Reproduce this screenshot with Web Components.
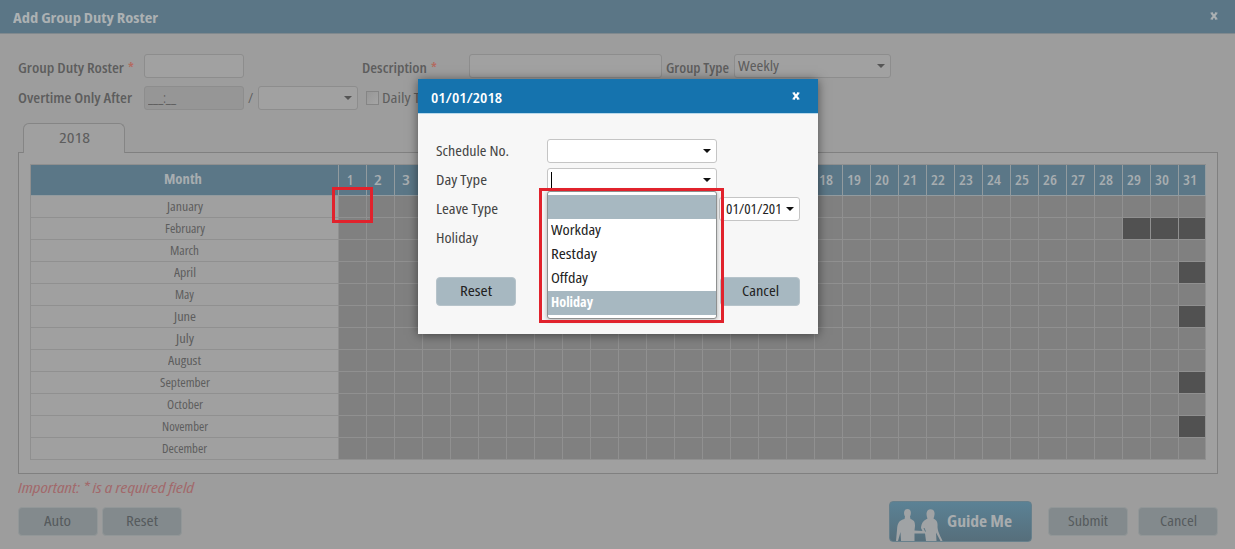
<!DOCTYPE html>
<html lang="en">
<head>
<meta charset="utf-8">
<title>Add Group Duty Roster</title>
<style>
  body {
    margin: 0;
    width: 1235px;
    height: 549px;
    overflow: hidden;
    position: relative;
    background: #9d9d9d;
    color: #5d5d5d;
    font-family: "Open Sans", "Noto Sans", sans-serif;
    font-stretch: 75%;
    font-size: 14px;
    line-height: 20px;
  }
</style>
</head>
<body>
<duty-roster></duty-roster>
<day-dialog heading="01/01/2018"></day-dialog>
<focus-frame style="--x:332px;--y:187px;--w:41px;--h:36px"></focus-frame>
<focus-frame style="--x:539px;--y:188px;--w:185px;--h:135px"></focus-frame>

<script>
// Text squeezed or stretched to the width it should take up
class FitText extends HTMLElement {
  constructor() {
    super();
    this.attachShadow({ mode: 'open' });
  }

  connectedCallback() {
    const w = Number(this.getAttribute('w'));
    this.shadowRoot.innerHTML = `
      <style>
        :host {
          display: inline-block;
          width: ${w}px;
          white-space: nowrap;
          flex: none;
          text-align: left;
        }
        span {
          display: inline-block;
          transform-origin: 0 50%;
        }
      </style>
      <span><slot></slot></span>
    `;
    const span = this.shadowRoot.querySelector('span');
    const real = span.getBoundingClientRect().width;
    if (real) span.style.transform = `scaleX(${w / real})`;
  }
}

class TitleBar extends HTMLElement {
  constructor() {
    super();
    this.attachShadow({ mode: 'open' });
    this.shadowRoot.innerHTML = `
      <style>
        :host {
          display: flex;
          justify-content: space-between;
          align-items: center;
          box-sizing: border-box;
          font-weight: 700;
        }
        svg {
          display: block;
          margin-top: var(--close-shift, -4px);
        }
      </style>
      <slot></slot>
      <svg width="8" height="8" viewBox="0 0 8 8" fill="none" stroke="currentColor">
        <path d="M1.5 1L6.5 7M6.5 1L1.5 7" stroke-width="2"/>
        <path d="M.5 1H3M5 1H7.500M.5 7H3M5 7H7.500" stroke-width="1"/>
      </svg>
    `;
  }
}

class TextBox extends HTMLElement {
  constructor() {
    super();
    this.attachShadow({ mode: 'open' });
    this.shadowRoot.innerHTML = `
      <style>
        :host {
          display: flex;
          align-items: center;
          box-sizing: border-box;
          width: 100%;
          height: 24px;
          padding: 0 0 0 3px;
          overflow: hidden;
          border: 1px solid var(--field-line, #8d8d8d);
          border-radius: 3px;
          background: var(--field-bg, #a1a1a1);
        }
        .value { flex: 1; display: flex; align-items: center; overflow: hidden; height: 100%; }
        svg { display: none; flex: none; margin: 0 5px 0 6px; }
        :host([drop]) svg { display: block; }
      </style>
      <div class="value"><slot></slot></div>
      <svg width="8" height="4" viewBox="0 0 8 4"><path d="M0 0H8L4 4Z" fill="var(--arrow, #555)"/></svg>
    `;
  }
}

class PushButton extends HTMLElement {
  constructor() {
    super();
    this.attachShadow({ mode: 'open' });
    this.shadowRoot.innerHTML = `
      <style>
        :host {
          display: flex;
          align-items: center;
          justify-content: center;
          box-sizing: border-box;
          width: 80px;
          height: 29px;
          padding-bottom: 1px;
          border-radius: 4px;
          border: 1px solid var(--button-line, #929798);
          background: var(--button-bg, #838a8d);
          color: var(--button-ink, #565b5d);
        }
      </style>
      <slot></slot>
    `;
  }
}

class GuideButton extends HTMLElement {
  constructor() {
    super();
    this.attachShadow({ mode: 'open' });
    this.shadowRoot.innerHTML = `
      <style>
        :host {
          display: flex;
          box-sizing: border-box;
          width: 144px;
          height: 41px;
          border-radius: 4px;
          overflow: hidden;
          border: 1px solid #67808c;
          background: linear-gradient(#5b8295, #566e7b);
          color: #a8acae;
          font-weight: 700;
          font-size: 16px;
          align-items: center;
        }
        svg { display: block; margin-left: 5px; flex: none; }
        slot { display: block; margin: 0 0 1px 4px; }
      </style>
      <svg width="48" height="39" viewBox="0 0 48 39" fill="#a0a3a5">
        <path d="M10 14.500 C8.500 12 8.500 7 12.500 7 C16.500 7 16.500 12 15 14.500 L15.500 17 C19.500 18.500 20 20 20 24 L19.500 28.500 L27.500 29 L26 26 C26.500 21 28 19 32.500 16.500 C30.500 12 31.500 7.300 35.500 7.300 C40 7.300 40.500 12 38.500 16.500 C42 18 43 21 42.500 25 C43 31 46 35 47.500 39 L45.500 39 L41 30.500 L41.500 39 L31 39 L30 31.500 L19.500 31.500 L19.500 39 L6 39 L5.500 30 L3 39 L1 39 L2 28 C2.500 20 4.500 18.500 9.500 17 Z"/>
        <path d="M29 26 L30.500 29.500" stroke="#5d7784" fill="none"/>
      </svg>
      <slot></slot>
    `;
  }
}

class MonthTable extends HTMLElement {
  constructor() {
    super();
    this.attachShadow({ mode: 'open' });
  }

  connectedCallback() {
    // name, drawn width, number of days
    const months = [
      ['January', 36, 31], ['February', 40, 28], ['March', 29, 31], ['April', 22, 30],
      ['May', 19, 31], ['June', 22, 30], ['July', 18, 31], ['August', 33, 31],
      ['September', 50, 30], ['October', 36, 31], ['November', 46, 30], ['December', 45, 31]
    ];
    const days = Array.from({ length: 31 }, (_, i) => i + 1);
    // days 4 to 17 lie under the dialog
    const head = days.map(d => `<div class="day">${d > 3 && d < 18 ? '' : `<fit-text w="${d === 1 ? 6 : d < 10 ? 8 : 14}">${d}</fit-text>`}</div>`).join('');
    const rows = months.map(([name, w, count]) => `
      <div class="month"><fit-text w="${w}">${name}</fit-text></div>
      ${days.map(d => `<div class="cell ${d > count ? 'off' : ''}"></div>`).join('')}
    `).join('');

    this.shadowRoot.innerHTML = `
      <style>
        :host {
          display: grid;
          box-sizing: border-box;
          width: 1176px;
          grid-template-columns: 308px repeat(30, 28px) 27px;
          grid-template-rows: 31px repeat(12, 22px);
          border: solid #8f8f8f;
          border-width: 1px 0 0 1px;
        }
        div {
          box-sizing: border-box;
          display: flex;
          align-items: center;
          justify-content: center;
          border: solid #909090;
          border-width: 0 1px 1px 0;
        }
        .head, .day {
          background: #5b7787;
          color: #a7adb0;
          font-weight: 700;
          border-color: #929b9f;
          padding-bottom: 2px;
        }
        .day { font-size: 15px; font-weight: 600; padding-right: 5px; padding-bottom: 3px; }
        .head { padding-right: 4px; }
        .month { font-size: 12px; background: #a0a0a0; }
        .cell { background: #808080; }
        .off { background: #515151; }
      </style>
      <div class="head"><fit-text w="38">Month</fit-text></div>${head}${rows}
    `;
  }
}

class DutyRoster extends HTMLElement {
  constructor() {
    super();
    this.attachShadow({ mode: 'open' });
  }

  connectedCallback() {
    this.shadowRoot.innerHTML = `
      <style>
        :host { display: block; }
        title-bar {
          height: 34px;
          padding: 2px 17px 0 13px;
          background: #5b7686;
          border-bottom: 1px solid #80898e;
          color: #acb1b3;
        }
        main { padding: 20px 17px 0 18px; }
        .row { display: grid; align-items: center; height: 24px; }
        .first { grid-template-columns: 126px 100px 118px 107px 193px 4px 68px 157px; }
        .second { grid-template-columns: 126px 100px 14px 100px 8px 16px auto; margin-top: 8px; }
        .label { display: flex; gap: 4px; font-weight: 600; white-space: nowrap; padding-top: 3px; }
        .second .label { padding-top: 0; }
        .req { color: #b46a60; }
        .slash { padding-left: 4px; }
        .mask { --field-bg: #969696; }
        .check {
          width: 13px;
          height: 14px;
          box-sizing: border-box;
          border: 1px solid #858585;
          background: linear-gradient(135deg, #979797, #a5a5a5);
        }
        .tab {
          box-sizing: border-box;
          width: 102px;
          height: 30px;
          margin: 13px 0 -1px 5px;
          border: 1px solid #858585;
          border-bottom: 0;
          border-radius: 6px 6px 0 0;
          background: #a0a0a0;
          display: flex;
          align-items: center;
          justify-content: center;
          padding-bottom: 3px;
          font-size: 15px;
          position: relative;
        }
        .panel {
          box-sizing: border-box;
          height: 322px;
          border: 1px solid #808080;
          background: #a0a0a0;
          padding: 11px;
        }
        .note { color: #a2696b; font-style: italic; padding: 4px 0 0 0; height: 29px; box-sizing: border-box; }
        footer { display: flex; align-items: center; gap: 4px; height: 41px; margin-top: -2px; }
        guide-button { margin: 0 12px 0 703px; }
        footer push-button:last-child { margin-left: 6px; }
      </style>
      <title-bar><fit-text w="145">Add Group Duty Roster</fit-text></title-bar>
      <main>
        <div class="row first">
          <div class="label"><fit-text w="106">Group Duty Roster</fit-text><span class="req">*</span></div>
          <text-box></text-box>
          <span></span>
          <div class="label"><fit-text w="65">Description</fit-text><span class="req">*</span></div>
          <text-box></text-box>
          <span></span>
          <div class="label"><fit-text w="63">Group Type</fit-text></div>
          <text-box drop><fit-text w="41">Weekly</fit-text></text-box>
        </div>
        <div class="row second">
          <div class="label"><fit-text w="114">Overtime Only After</fit-text></div>
          <text-box class="mask"><fit-text w="28">___:__</fit-text></text-box>
          <span class="slash">/</span>
          <text-box drop></text-box>
          <span></span>
          <span class="check"></span>
          <fit-text w="38">Daily T</fit-text>
        </div>
        <div class="tab"><fit-text w="31">2018</fit-text></div>
        <div class="panel"><month-table></month-table></div>
        <div class="note"><fit-text w="176">Important: * is a required field</fit-text></div>
        <footer>
          <push-button><fit-text w="27">Auto</fit-text></push-button>
          <push-button><fit-text w="32">Reset</fit-text></push-button>
          <guide-button><fit-text w="65">Guide Me</fit-text></guide-button>
          <push-button><fit-text w="40">Submit</fit-text></push-button>
          <push-button><fit-text w="37">Cancel</fit-text></push-button>
        </footer>
      </main>
    `;
  }
}

class DropList extends HTMLElement {
  constructor() {
    super();
    this.attachShadow({ mode: 'open' });
    this.shadowRoot.innerHTML = `
      <style>
        :host {
          display: block;
          box-sizing: border-box;
          width: 170px;
          height: 128px;
          padding: 3px 0;
          background: #fff;
          border: 1px solid #8e9090;
          border-radius: 3px;
          box-shadow: 0 1px 5px rgba(0,0,0,.3);
          color: #222;
        }
        .item { box-sizing: border-box; height: 24px; padding: 0 0 2px 3px; display: flex; align-items: center; }
        .fill { background: #a7b8c1; }
        .active { color: #fff; font-weight: 700; }
      </style>
      <div class="item fill"></div>
      <div class="item"><fit-text w="50">Workday</fit-text></div>
      <div class="item"><fit-text w="46">Restday</fit-text></div>
      <div class="item"><fit-text w="37">Offday</fit-text></div>
      <div class="item fill active"><fit-text w="42">Holiday</fit-text></div>
    `;
  }
}

class DayDialog extends HTMLElement {
  constructor() {
    super();
    this.attachShadow({ mode: 'open' });
  }

  connectedCallback() {
    this.shadowRoot.innerHTML = `
      <style>
        :host {
          position: absolute;
          left: 418px;
          top: 79px;
          width: 400px;
          height: 255px;
          background: #f7f7f7;
          box-shadow: 0 1px 10px rgba(0,0,0,.5);
          color: #444;
          --field-line: #c5c5c5;
          --field-bg: #fff;
          --arrow: #111;
          --button-bg: #a7b8c1;
          --button-line: #b6c3ca;
          --button-ink: #222;
        }
        title-bar {
          height: 35px;
          padding: 1px 18px 0 13px;
          font-weight: 600;
          background: #1573ae;
          border-bottom: 1px solid #b9d9eb;
          color: #fff;
          font-size: 15px;
          --close-shift: -2px;
        }
        .form {
          display: grid;
          grid-template-columns: 111px 170px;
          grid-auto-rows: 24px;
          row-gap: 5px;
          align-items: center;
          padding: 25px 18px 0;
        }
        .form > fit-text { margin-top: -1px; }
        .leave { display: flex; width: 253px; }
        .leave text-box:first-child { width: 170px; }
        .leave .date { width: 81px; margin-left: 2px; padding-left: 6px; color: #222; }
        .anchor { position: relative; }
        .caret { width: 1px; height: 17px; background: #000; }
        drop-list { position: absolute; left: 0; top: 23px; z-index: 1; }
        .buttons { display: flex; justify-content: space-between; padding: 27px 18px 0; }
      </style>
      <title-bar><fit-text w="71">${this.getAttribute('heading')}</fit-text></title-bar>
      <div class="form">
        <fit-text w="73">Schedule No.</fit-text>
        <text-box drop></text-box>
        <fit-text w="51">Day Type</fit-text>
        <div class="anchor">
          <text-box drop><span class="caret"></span></text-box>
          <drop-list></drop-list>
        </div>
        <fit-text w="62">Leave Type</fit-text>
        <div class="leave">
          <text-box drop></text-box>
          <text-box class="date" drop><fit-text w="62">01/01/2018</fit-text></text-box>
        </div>
        <fit-text w="42">Holiday</fit-text>
      </div>
      <div class="buttons">
        <push-button><fit-text w="32">Reset</fit-text></push-button>
        <push-button><fit-text w="37">Cancel</fit-text></push-button>
      </div>
    `;
  }
}

class FocusFrame extends HTMLElement {
  constructor() {
    super();
    this.attachShadow({ mode: 'open' });
    this.shadowRoot.innerHTML = `
      <style>
        :host {
          position: absolute;
          box-sizing: border-box;
          left: var(--x);
          top: var(--y);
          width: var(--w);
          height: var(--h);
          border: 3px solid #e1222c;
          z-index: 2;
        }
      </style>
    `;
  }
}

customElements.define('fit-text', FitText);
customElements.define('title-bar', TitleBar);
customElements.define('text-box', TextBox);
customElements.define('push-button', PushButton);
customElements.define('guide-button', GuideButton);
customElements.define('month-table', MonthTable);
customElements.define('drop-list', DropList);
customElements.define('duty-roster', DutyRoster);
customElements.define('day-dialog', DayDialog);
customElements.define('focus-frame', FocusFrame);
</script>
</body>
</html>
